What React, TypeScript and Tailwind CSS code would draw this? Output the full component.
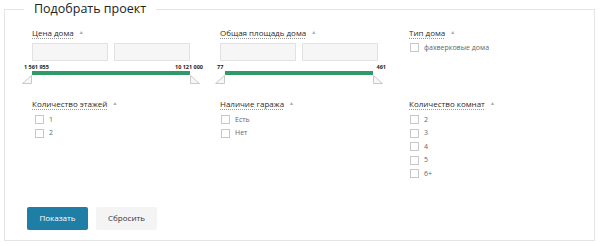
const font = { fontFamily: '"Open Sans", "Noto Sans", sans-serif' };

function Label({ children }: { children: string }) {
  return (
    <div className="flex items-center gap-[5px] h-[12px]">
      <span className="text-[8px] text-[#2a2a2a] underline decoration-dotted decoration-[#999] underline-offset-2">{children}</span>
      <span className="text-[5px] text-[#aaa]">▲</span>
    </div>
  );
}

function Check({ label }: { label: string }) {
  return (
    <label className="flex items-center gap-[5px] h-[13.5px]">
      <span className="w-[9px] h-[9px] border border-[#c8c8c8] bg-white" />
      <span className="text-[7px] text-[#666]">{label}</span>
    </label>
  );
}

function Handle({ side }: { side: 'left' | 'right' }) {
  const d = side === 'left' ? 'M9.5 0.5 L9.5 8.5 L0.5 8.5 Z' : 'M0.5 0.5 L0.5 8.5 L9.5 8.5 Z';
  return (
    <svg width="10" height="9" viewBox="0 0 10 9">
      <path d={d} fill="#f7f7f7" stroke="#c9c9c9" strokeWidth="1" />
    </svg>
  );
}

function Range({ min, max, inset }: { min: string; max: string; inset: number }) {
  return (
    <div className="w-[158px]">
      <div className="flex gap-[6px]">
        <div className="w-[76px] h-[18px] border border-[#e2e2e2] bg-[#f6f6f6]" />
        <div className="w-[76px] h-[18px] border border-[#e2e2e2] bg-[#f6f6f6]" />
      </div>
      <div className="relative h-[26px]" style={{ marginLeft: inset, marginRight: inset }}>
        <span className="absolute left-[-8px] top-[2px] text-[5.5px] font-bold text-[#222]">{min}</span>
        <span className="absolute right-[-13px] top-[2px] text-[5.5px] font-bold text-[#222]">{max}</span>
        <div className="absolute left-0 right-0 top-[10px] h-[4px] bg-[#2f9a68]" />
        <div className="absolute left-[-10px] top-[14px]"><Handle side="left" /></div>
        <div className="absolute right-[-10px] top-[14px]"><Handle side="right" /></div>
      </div>
    </div>
  );
}

export default function App() {
  return (
    <div className="w-[600px] h-[246px] bg-white" style={font}>
      <fieldset className="ml-[4px] w-[591px] h-[241px] border border-[#e4e4e4] pl-[27px]">
        <legend className="ml-[-8px] px-[10px] text-[12.5px] leading-[18px] text-[#222]">Подобрать проект</legend>
        <div className="grid grid-cols-[188px_189px_1fr] mt-[9px]">
          <div>
            <Label>Цена дома</Label>
            <div className="mt-[4px]"><Range min="1 561 955" max="10 121 000" inset={0} /></div>
          </div>
          <div>
            <Label>Общая площадь дома</Label>
            <div className="mt-[4px]"><Range min="77" max="461" inset={5} /></div>
          </div>
          <div>
            <Label>Тип дома</Label>
            <div className="mt-[2px] pl-[1px]"><Check label="фахверковые дома" /></div>
          </div>
        </div>
        <div className="grid grid-cols-[188px_189px_1fr] mt-[11px]">
          <div>
            <Label>Количество этажей</Label>
            <div className="mt-[3px] pl-[3px]">
              <Check label="1" />
              <Check label="2" />
            </div>
          </div>
          <div>
            <Label>Наличие гаража</Label>
            <div className="mt-[3px] pl-[1px]">
              <Check label="Есть" />
              <Check label="Нет" />
            </div>
          </div>
          <div>
            <Label>Количество комнат</Label>
            <div className="mt-[3px] pl-[1px]">
              <Check label="2" />
              <Check label="3" />
              <Check label="4" />
              <Check label="5" />
              <Check label="6+" />
            </div>
          </div>
        </div>
        <div className="flex gap-[8px] mt-[26px] ml-[-5px]">
          <button className="w-[61px] h-[23px] rounded-[2px] bg-[#1f7ea6] text-white text-[8px]">Показать</button>
          <button className="w-[61px] h-[23px] rounded-[2px] bg-[#f4f4f4] text-[#333] text-[8px]">Сбросить</button>
        </div>
      </fieldset>
    </div>
  );
}
